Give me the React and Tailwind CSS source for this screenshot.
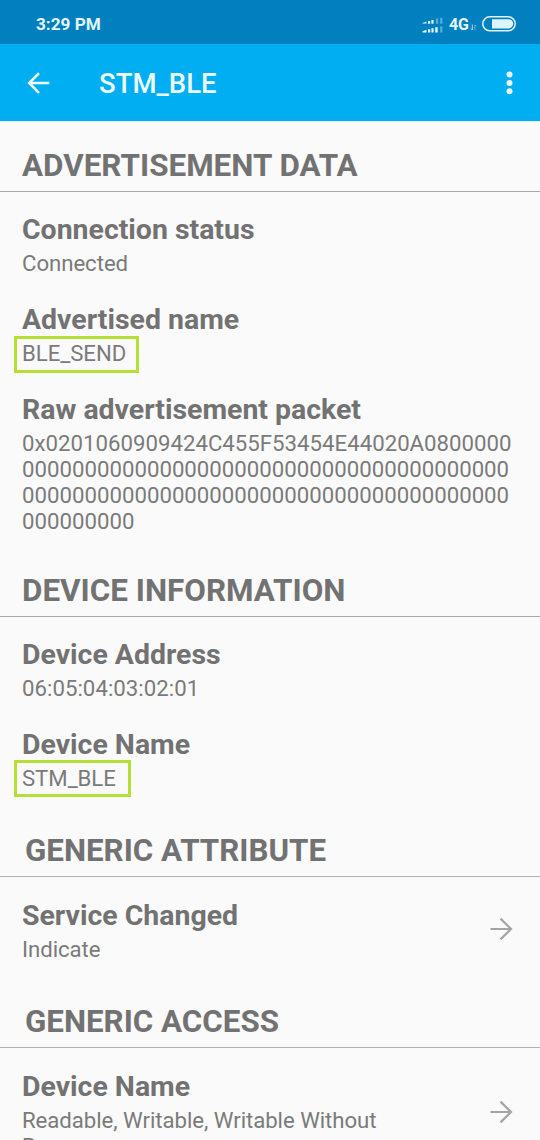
function StatusIcons() {
  return (
    <div className="flex items-center pt-[2px]">
      <svg className="mt-[3px] mr-[5px]" width="22" height="18" viewBox="0 0 22 18" fill="#e3f6fd">
        <path d="M0.5 6 L4.5 4.5 V6.6 H0.5Z M6 4 h2.2 v2.8 h-2.2z M9.4 3 h2.2 v3.8 h-2.2z" />
        <path d="M0.5 14.2 L4.5 12.7 V15.4 H0.5Z M6 12.2 h2.2 v3.4 h-2.2z M9.4 11.2 h2.2 v4.4 h-2.2z M13.2 10.2 h2.5 v5.4 h-2.5z" />
        <path fillOpacity="0.4" d="M14 1.6 h2.2 v5.2 h-2.2z M18.2 0.8 h2.2 v6 h-2.2z M18.2 9.6 h2.2 v6 h-2.2z" />
      </svg>
      <span className="pt-[2px] text-[16px] leading-5 font-bold">4G</span>
      <svg className="mt-[7px] ml-[1px] mr-[4px]" width="8" height="7" viewBox="0 0 8 7" fill="none" stroke="#bfe4f5" strokeWidth="0.9">
        <path d="M2.3 0.5 V6 L0.8 4.5" />
        <path strokeOpacity="0.6" d="M4.9 6.3 V1 L6.3 2.4" />
      </svg>
      <svg width="34" height="16" viewBox="0 0 34 16">
        <rect x="0.8" y="0.8" width="32.4" height="14" rx="7" fill="none" stroke="#dff5fd" strokeWidth="1.5" />
        <path d="M10 3.2 H26.6 a4.6 4.6 0 0 1 0 9.2 H10Z" fill="#dff5fd" />
      </svg>
    </div>
  );
}

function SectionHeader({ children, generic }) {
  return (
    <h2
      className={
        generic
          ? "mb-[11px] flex h-[70px] items-end border-b border-[#b0b0b0] pb-[7px] pl-[25px] text-[31.3px] leading-[36px] font-bold"
          : "mb-2.5 flex h-[68px] items-end border-b border-[#a9a9a9] pb-[7px] pl-[22px] text-[31.4px] leading-[36px] font-bold"
      }
    >
      {children}
    </h2>
  );
}

function Item({ title, children, arrow }) {
  return (
    <div className="flex min-h-[90px] items-start justify-between pt-[10px] pb-[15px] pl-[22px]">
      <div>
        <h3 className="text-[28.45px] leading-[36px] font-bold">{title}</h3>
        <div className="mt-[2px] text-[22.2px] leading-[26px] font-normal tracking-[-0.05px] text-[#7a7a7a]">{children}</div>
      </div>
      {arrow}
    </div>
  );
}

function Arrow({ className }) {
  return (
    <svg className={className} width="24" height="24" viewBox="0 0 24 24" fill="none" stroke="#a4a4a4" strokeWidth="2.2">
      <path d="M1.5 12 H22 M11.5 1.6 L22 12 L11.5 22.4" />
    </svg>
  );
}

function Highlight({ children, className }) {
  return (
    <span className="relative">
      {children}
      <span className={className} />
    </span>
  );
}

export default function App() {
  return (
    <div className="flex h-[1140px] w-[540px] flex-col overflow-hidden bg-[#fafafa] font-['Roboto',sans-serif] text-[#727272]">
      <div className="box-content flex h-[42px] shrink-0 items-center justify-between bg-[#017fbf] pt-[2px] pr-6 pl-9 text-[#e3f6fd]">
        <span className="pt-px text-[17.2px] leading-5 font-bold">3:29 PM</span>
        <StatusIcons />
      </div>
      <header className="flex h-[77px] shrink-0 items-center bg-[#02aef2] pr-[27px] pl-[27px] text-[#ecfbff]">
        <svg width="24" height="24" viewBox="0 0 24 24" fill="none" stroke="currentColor" strokeWidth="2.6">
          <path d="M22.4 12 H2.5 M12 2.2 L2.2 12 L12 21.8" />
        </svg>
        <h1 className="ml-12 flex-1 pt-[3px] text-[27.5px] leading-8 font-medium">STM_BLE</h1>
        <svg width="8" height="26" viewBox="0 0 8 26" fill="currentColor">
          <circle cx="4.5" cy="4.6" r="3" />
          <circle cx="4.5" cy="13" r="3" />
          <circle cx="4.5" cy="21.3" r="3" />
        </svg>
      </header>
      <main className="flex shrink-0 flex-col border-t border-[#e3f1f7] pt-[2px]">
        <SectionHeader>ADVERTISEMENT DATA</SectionHeader>
        <Item title="Connection status">Connected</Item>
        <Item title="Advertised name">
          <Highlight className="absolute -top-[4px] -left-2 h-[37px] w-[125px] border-3 border-[#b5df33]">BLE_SEND</Highlight>
        </Item>
        <Item title="Raw advertisement packet">
          <div className="tracking-[0.02px]">
            <div>0x0201060909424C455F53454E44020A0800000</div>
            <div>000000000000000000000000000000000000000</div>
            <div>000000000000000000000000000000000000000</div>
            <div>000000000</div>
          </div>
        </Item>
        <SectionHeader>DEVICE INFORMATION</SectionHeader>
        <Item title="Device Address">
          <span className="tracking-[0.04px]">06:05:04:03:02:01</span>
        </Item>
        <Item title="Device Name">
          <Highlight className="absolute -top-[5px] -left-2 h-[37px] w-[117px] border-3 border-[#b5df33]">STM_BLE</Highlight>
        </Item>
        <SectionHeader generic>GENERIC ATTRIBUTE</SectionHeader>
        <Item title="Service Changed" arrow={<Arrow className="mt-[19px] mr-[27px]" />}>
          Indicate
        </Item>
        <SectionHeader generic>GENERIC ACCESS</SectionHeader>
        <Item title="Device Name" arrow={<Arrow className="mt-[31px] mr-[27px]" />}>
          <div>Readable, Writable, Writable Without</div>
          <div>Response</div>
        </Item>
      </main>
    </div>
  );
}
